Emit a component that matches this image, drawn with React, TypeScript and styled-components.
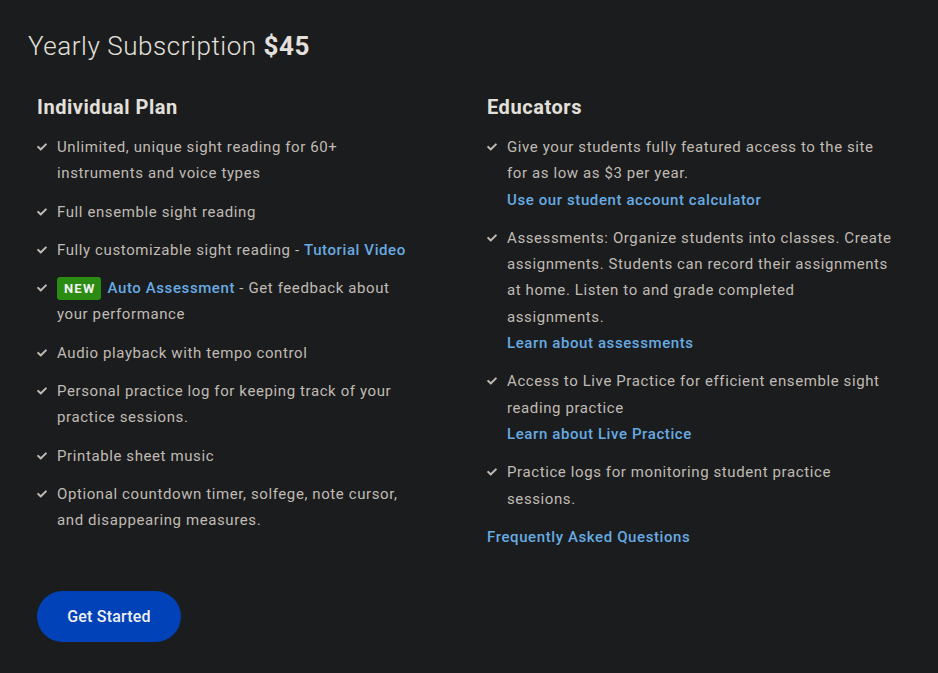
import styled, { createGlobalStyle } from "styled-components"

const GlobalStyle = createGlobalStyle`
	html, body {
		margin: 0;
		padding: 0;
		background-color: #1b1c1e;
	}
	body {
		font-family: Roboto, "Liberation Sans", sans-serif;
		color: #c0bbb4;
	}
`

const Page = styled.div`
	min-height: 673px;
	padding: 28px 28px 30px;
	box-sizing: border-box;
`

const Title = styled.h1`
	margin: 0 0 30px;
	font-size: 26px;
	font-weight: 300;
	line-height: 36px;
	letter-spacing: 0.55px;
	color: #e3e0db;

	strong {
		font-weight: 700;
	}
`

const Columns = styled.div`
	display: flex;
	padding-left: 9px;
`

const Column = styled.div<{ $width: number }>`
	width: ${(p) => p.$width}px;
`

const Heading = styled.h2`
	margin: 0 0 14px;
	font-size: 20px;
	font-weight: 700;
	line-height: 26px;
	letter-spacing: 0.55px;
	color: #e3e0db;
`

const List = styled.ul<{ $textWidth: number }>`
	list-style: none;
	margin: 0;
	padding: 0;
	width: ${(p) => p.$textWidth + 20}px;
`

const Item = styled.li`
	display: flex;
	align-items: flex-start;
	font-size: 15px;
	line-height: 26.3px;
	letter-spacing: 0.6px;
	margin-bottom: 12px;
`

const Check = styled.svg`
	flex: none;
	width: 10px;
	height: 10px;
	margin: 8px 10px 0 0;
	fill: #c0bbb4;
`

const Link = styled.a`
	color: #67abe2;
	font-weight: 500;
	text-decoration: none;
`

const BlockLink = styled(Link)`
	display: block;
`

const Badge = styled.span`
	display: inline-block;
	background-color: #2a8c12;
	color: #f2f2f2;
	font-size: 13px;
	font-weight: 700;
	letter-spacing: 1.2px;
	line-height: 23px;
	padding: 0 6px 0 7px;
	border-radius: 3px;
	margin-right: 6px;
`

const Faq = styled.p`
	margin: 0;
	font-size: 15px;
	line-height: 26px;
	letter-spacing: 0.6px;
`

const StartButton = styled.button`
	margin: 41px 0 0 9px;
	width: 144px;
	height: 51px;
	border: none;
	border-radius: 26px;
	background-color: #0142b9;
	color: #f0f0f0;
	font-family: Roboto, "Liberation Sans", sans-serif;
	font-size: 16px;
	font-weight: 500;
	letter-spacing: 0.2px;
	cursor: pointer;
`

const Tick = () => (
	<Check viewBox="0 0 512 512">
		<path d="M173.9 439.4l-166.4-166.4c-10-10-10-26.2 0-36.2l36.2-36.2c10-10 26.2-10 36.2 0L192 312.7 432.1 72.6c10-10 26.2-10 36.2 0l36.2 36.2c10 10 10 26.2 0 36.2l-294.4 294.4c-10 10-26.2 10-36.2 0z" />
	</Check>
)

const App = () => {
	return (
		<>
		<GlobalStyle />
		<Page>
			<Title>
				Yearly Subscription <strong>$45</strong>
			</Title>
			<Columns>
				<Column $width={450}>
					<Heading>Individual Plan</Heading>
					<List $textWidth={366}>
						<Item>
							<Tick />
							<span>Unlimited, unique sight reading for 60+ instruments and voice types</span>
						</Item>
						<Item>
							<Tick />
							<span>Full ensemble sight reading</span>
						</Item>
						<Item>
							<Tick />
							<span>Fully customizable sight reading - <Link href="#">Tutorial Video</Link></span>
						</Item>
						<Item>
							<Tick />
							<span>
								<Badge>NEW</Badge>
								<Link href="#">Auto Assessment</Link> - Get feedback about your performance
							</span>
						</Item>
						<Item>
							<Tick />
							<span>Audio playback with tempo control</span>
						</Item>
						<Item>
							<Tick />
							<span>Personal practice log for keeping track of your practice sessions.</span>
						</Item>
						<Item>
							<Tick />
							<span>Printable sheet music</span>
						</Item>
						<Item>
							<Tick />
							<span>Optional countdown timer, solfege, note cursor, and disappearing measures.</span>
						</Item>
					</List>
				</Column>
				<Column $width={420}>
					<Heading>Educators</Heading>
					<List $textWidth={386}>
						<Item>
							<Tick />
							<span>
								Give your students fully featured access to the site for as low as $3 per year.
								<BlockLink href="#">Use our student account calculator</BlockLink>
							</span>
						</Item>
						<Item>
							<Tick />
							<span>
								Assessments: Organize students into classes. Create assignments. Students can record their assignments at home. Listen to and grade completed assignments.
								<BlockLink href="#">Learn about assessments</BlockLink>
							</span>
						</Item>
						<Item>
							<Tick />
							<span>
								Access to Live Practice for efficient ensemble sight reading practice
								<BlockLink href="#">Learn about Live Practice</BlockLink>
							</span>
						</Item>
						<Item>
							<Tick />
							<span>Practice logs for monitoring student practice sessions.</span>
						</Item>
					</List>
					<Faq>
						<Link href="#">Frequently Asked Questions</Link>
					</Faq>
				</Column>
			</Columns>
			<StartButton>Get Started</StartButton>
		</Page>
		</>
	)
}

export default App
